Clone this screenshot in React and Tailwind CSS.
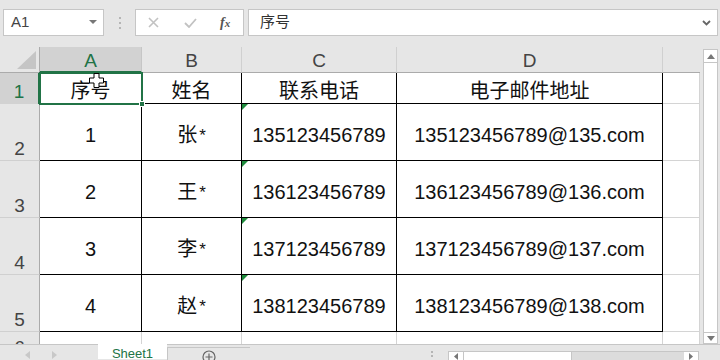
import React from 'react'

const FONT = { fontFamily: '"Liberation Sans", "Noto Sans CJK SC", sans-serif' }

const rows = [
  { n: 1, name: '张', tel: '135123456789', mail: '135123456789@135.com' },
  { n: 2, name: '王', tel: '136123456789', mail: '136123456789@136.com' },
  { n: 3, name: '李', tel: '137123456789', mail: '137123456789@137.com' },
  { n: 4, name: '赵', tel: '138123456789', mail: '138123456789@138.com' },
]

const GreenTick = () => (
  <svg className="absolute left-0 top-0" width="6" height="6" viewBox="0 0 6 6">
    <polygon points="0,0 6,0 0,6" fill="#1e8b3c" />
  </svg>
)

const Toolbar = () => (
  <div className="h-[47px] bg-[#e6e6e6] flex items-start pt-[9px] text-[#444]" style={FONT}>
    <div className="ml-[3px] w-[101px] h-[27px] bg-white border border-[#c6c6c6] flex items-center justify-between pl-[7px] pr-[6px]">
      <span className="text-[15px]">A1</span>
      <svg width="8" height="5" viewBox="0 0 8 5"><polygon points="0,0 8,0 4,4" fill="#777" /></svg>
    </div>
    <div className="w-[31px] h-[27px] flex flex-col items-center justify-center gap-[3px]">
      <span className="w-[2px] h-[2px] bg-[#b5b5b5]" />
      <span className="w-[2px] h-[2px] bg-[#b5b5b5]" />
      <span className="w-[2px] h-[2px] bg-[#b5b5b5]" />
    </div>
    <div className="w-[109px] h-[27px] bg-white border border-[#c6c6c6] flex items-center">
      <svg className="ml-[12px]" width="11" height="11" viewBox="0 0 11 11">
        <path d="M1 1 L10 10 M10 1 L1 10" stroke="#c2c2c2" strokeWidth="1.6" />
      </svg>
      <svg className="ml-[25px]" width="13" height="10" viewBox="0 0 13 10">
        <path d="M1 5 L5 9 L12 1" stroke="#c2c2c2" strokeWidth="1.8" fill="none" />
      </svg>
      <span className="ml-[23px] text-[14px] italic font-bold text-[#555]" style={{ fontFamily: '"Liberation Serif", serif' }}>
        f<span className="text-[11px]">x</span>
      </span>
    </div>
    <div className="ml-[4px] w-[470px] h-[27px] bg-white border border-[#c6c6c6] flex items-center justify-between pl-[11px] pr-[6px]">
      <span className="text-[15px] text-[#333]">序号</span>
      <svg width="9" height="6" viewBox="0 0 9 6"><path d="M1 1 L4.5 4.5 L8 1" stroke="#666" strokeWidth="1.8" fill="none" /></svg>
    </div>
  </div>
)

const colHead = 'h-full flex items-center justify-center pt-[2px] bg-[#e6e6e6] border-r border-[#d0d0d0] border-b border-b-[#ababab] text-[19px] text-[#444] leading-none'
const rowHead = 'h-full flex items-end justify-center pb-[2px] bg-[#e6e6e6] border-r border-r-[#ababab] border-b border-[#d0d0d0] text-[19px] text-[#444] leading-none'
const cell = 'relative h-full flex items-center justify-center pt-[6px] bg-white border-r border-b border-black text-[20px] text-[#111] leading-none'
const blank = 'h-full bg-white border-r border-b border-[#d4d4d4]'

const Sheet = () => (
  <div className="relative w-[700px] h-[297px] overflow-hidden" style={FONT}>
    <div className="grid grid-cols-[40px_102px_100px_155px_266px_37px] grid-rows-[26px_31px_57px_57px_57px_57px_20px]">
      <div className="h-full bg-[#e6e6e6] border-r border-[#ababab] border-b flex items-end justify-end p-[3px]">
        <svg width="19" height="18" viewBox="0 0 19 18"><polygon points="0,18 19,18 19,0" fill="#c5c5c5" /></svg>
      </div>
      <div className="h-full flex items-center justify-center pt-[2px] bg-[#d2d2d2] border-r border-[#c6c6c6] border-b-2 border-b-[#217346] text-[19px] text-[#217346] leading-none">A</div>
      <div className={colHead}>B</div>
      <div className={colHead}>C</div>
      <div className={colHead}>D</div>
      <div className="h-full bg-[#e6e6e6] border-b border-b-[#ababab]" />

      <div className="h-full flex items-center justify-center bg-[#d2d2d2] border-r-2 border-r-[#217346] text-[19px] text-[#217346] leading-none pt-[6px]">1</div>
      <div className={cell}>序号</div>
      <div className={cell}>姓名</div>
      <div className={cell}>联系电话</div>
      <div className={cell}>电子邮件地址</div>
      <div className={blank} />

      {rows.map((r) => (
        <React.Fragment key={r.n}>
          <div className={rowHead}>{r.n + 1}</div>
          <div className={cell}>{r.n}</div>
          <div className={cell}>{r.name}<span className="text-[17px] ml-[2px]">*</span></div>
          <div className={cell}><GreenTick />{r.tel}</div>
          <div className={cell}>{r.mail}</div>
          <div className={blank} />
        </React.Fragment>
      ))}

      <div className="h-full bg-[#e6e6e6] border-r border-r-[#ababab] flex justify-center pt-[6px] text-[19px] text-[#444] leading-none">6</div>
      <div className={blank} />
      <div className={blank} />
      <div className={blank} />
      <div className={blank} />
      <div className={blank} />
    </div>

    {/* selected cell A1 */}
    <div className="absolute left-[39px] top-[25px] w-[104px] h-[33px] border-2 border-[#217346]" />
    <div className="absolute left-[139px] top-[54px] w-[6px] h-[6px] bg-[#217346] border border-white" />

    {/* cursor */}
    <svg className="absolute left-[89px] top-[26px]" width="15" height="15" viewBox="0 0 15 15">
      <path d="M5 0.5 H10 V5 H14.5 V10 H10 V14.5 H5 V10 H0.5 V5 H5 Z" fill="#fff" stroke="#000" strokeWidth="1" />
    </svg>
  </div>
)

const VScroll = () => (
  <div className="w-[20px] h-[297px] bg-[#e6e6e6] flex flex-col pl-[3px] pr-[2px] pt-[2px]">
    <div className="h-[14px] bg-white border border-[#c6c6c6] flex items-center justify-center">
      <svg width="8" height="5" viewBox="0 0 8 5"><polygon points="0,5 8,5 4,0" fill="#777" /></svg>
    </div>
    <div className="flex-1 bg-white border-x border-[#c6c6c6]" />
    <div className="h-[12px] bg-white border border-[#c6c6c6] flex items-center justify-center">
      <svg width="8" height="5" viewBox="0 0 8 5"><polygon points="0,0 8,0 4,5" fill="#777" /></svg>
    </div>
  </div>
)

const BottomBar = () => (
  <div className="h-[16px] bg-[#e6e6e6] flex items-start border-t border-[#c6c6c6]" style={FONT}>
    <div className="w-[98px] h-full flex items-center gap-[22px] pl-[25px] pt-[4px]">
      <svg width="5" height="8" viewBox="0 0 5 8"><polygon points="5,0 5,8 0,4" fill="#c8c8c8" /></svg>
      <svg width="5" height="8" viewBox="0 0 5 8"><polygon points="0,0 0,8 5,4" fill="#c8c8c8" /></svg>
    </div>
    <div className="w-[69px] h-full bg-white -mt-[1px] flex justify-center pt-[3px] text-[13px] text-[#217346] leading-none">Sheet1</div>
    <div className="w-[83px] h-full mt-[2px] border-l border-t border-[#c6c6c6] flex justify-center pt-[2px]">
      <svg width="14" height="14" viewBox="0 0 14 14">
        <circle cx="7" cy="7" r="6" fill="none" stroke="#666" strokeWidth="1.2" />
        <path d="M7 3.5 V10.5 M3.5 7 H10.5" stroke="#666" strokeWidth="1.2" />
      </svg>
    </div>
    <div className="w-[184px] h-full flex justify-end pr-[1px] pt-[6px]">
      <div className="flex flex-col gap-[2px]">
        <span className="w-[2px] h-[2px] bg-[#b5b5b5]" />
        <span className="w-[2px] h-[2px] bg-[#b5b5b5]" />
      </div>
    </div>
    <div className="ml-[14px] w-[251px] h-[10px] mt-[6px] flex border border-[#c6c6c6] bg-[#dcdcdc]">
      <div className="w-[14px] h-full bg-white flex items-center justify-center">
        <svg width="4" height="7" viewBox="0 0 4 7"><polygon points="4,0 4,7 0,3.5" fill="#777" /></svg>
      </div>
      <div className="w-[109px] h-full bg-white border-x border-[#c6c6c6]" />
      <div className="flex-1" />
      <div className="w-[14px] h-full bg-white flex items-center justify-center">
        <svg width="4" height="7" viewBox="0 0 4 7"><polygon points="0,0 0,7 4,3.5" fill="#777" /></svg>
      </div>
    </div>
  </div>
)

export default function App() {
  return (
    <div className="w-[720px] h-[360px] overflow-hidden bg-[#e6e6e6] flex flex-col">
      <Toolbar />
      <div className="flex">
        <Sheet />
        <VScroll />
      </div>
      <BottomBar />
    </div>
  )
}
